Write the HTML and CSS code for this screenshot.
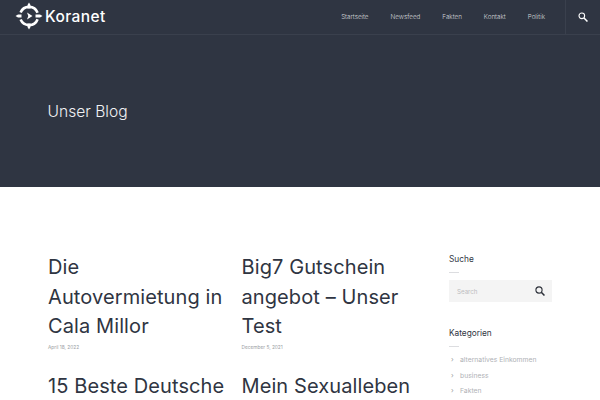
FILE: index.html
```html
<!DOCTYPE html>
<html lang="de">
<head>
<meta charset="utf-8">
<title>Unser Blog</title>
<link rel="stylesheet" href="styles.css">
</head>
<body>
<section class="hero">
  <header class="topbar">
    <a class="logo">
      <svg class="logo-icon" width="30" height="30" viewBox="0 0 30 30" fill="none" stroke="#fff">
        <path d="M6.600 11.400A9.200 9.200 0 0 1 23.600 11.800M23.600 18.200A9.200 9.200 0 0 1 6.600 18.600" stroke-width="2.600"/>
        <path d="M15 1.500l1.500 2.500v3.500h-3V4zM15 28.500l1.500-2.500v-3.500h-3V26zM1.500 15l2.500-1.500h3.500v3H4zM28.500 15l-2.500-1.500h-4.500v3H26z" fill="#fff" stroke="none"/>
        <path d="M13 11.500l5.500 3.500-5.500 3.500 1.300-3.500z" fill="#fff" stroke="none"/>
      </svg>
      <span class="logo-text">Koranet</span>
    </a>
    <nav class="nav">
      <a>Startseite</a>
      <a>Newsfeed</a>
      <a>Fakten</a>
      <a>Kontakt</a>
      <a>Politik</a>
    </nav>
    <div class="nav-search">
      <svg width="10" height="10" viewBox="0 0 11 11" fill="none" stroke="#fff" stroke-width="1.200"><circle cx="4.200" cy="4.200" r="3.100"/><path d="M6.600 6.600l3.800 3.800" stroke-width="1.700"/></svg>
    </div>
  </header>
  <h1 class="hero-title">Unser Blog</h1>
</section>
<main class="content">
  <div class="posts">
    <article class="post">
      <h2>Die Autovermietung in Cala Millor</h2>
      <time>April 18, 2022</time>
    </article>
    <article class="post">
      <h2>Big7 Gutschein angebot – Unser Test</h2>
      <time>December 5, 2021</time>
    </article>
    <article class="post">
      <h2>15 Beste Deutsche</h2>
    </article>
    <article class="post">
      <h2>Mein Sexualleben</h2>
    </article>
  </div>
  <aside class="sidebar">
    <h3>Suche</h3>
    <div class="searchbox">
      <span>Search</span>
      <svg width="10" height="10" viewBox="0 0 11 11" fill="none" stroke="#2b2f38" stroke-width="1.200"><circle cx="4.400" cy="4.400" r="3.400"/><path d="M6.900 6.900l3.500 3.500" stroke-width="1.700"/></svg>
    </div>
    <h3 class="cat-title">Kategorien</h3>
    <ul class="cats">
      <li>alternatives Einkommen</li>
      <li>business</li>
      <li>Fakten</li>
    </ul>
  </aside>
</main>
</body>
</html>
```
FILE: styles.css
```css
* { box-sizing: border-box; }
html, body { margin: 0; height: 400px; overflow: hidden; background: #fff; }
body { font-family: Inter, "Liberation Sans", sans-serif; color: #2f3542; }

.hero { height: 187px; background: #2f3542; }
.topbar {
  height: 35px;
  display: flex;
  align-items: center;
  border-bottom: 1px solid #3a404d;
  padding-left: 14px;
}
.logo { display: flex; align-items: center; gap: 1px; margin-top: -2px; }
.logo-text { color: #fff; font-size: 15.500px; font-weight: 500; letter-spacing: 0.400px; }
.nav { margin-left: auto; display: flex; gap: 22px; padding-right: 20px; }
.nav a { color: #d4d6da; font-size: 6.300px; font-weight: 300; }
.nav-search {
  width: 35px; height: 34px;
  border-left: 1px solid #3a404d;
  display: flex; align-items: center; justify-content: center;
}
.hero-title {
  margin: 66px 0 0 47.500px;
  font-size: 15.600px; line-height: 22px; font-weight: 300;
  color: #f0f1f3;
}

.content { display: flex; padding: 66px 48px 0; }
.posts {
  width: 387px;
  display: grid;
  grid-template-columns: 193.500px 193.500px;
  grid-auto-rows: min-content;
  row-gap: 21px;
}
.post h2 {
  margin: 0; padding-right: 12px;
  font-size: 20px; line-height: 29.500px; font-weight: 400;
  letter-spacing: 0.100px;
  color: #2f3542;
}
.post time { display: block; margin-top: 1px; font-size: 4.800px; line-height: 8px; color: #9a9da3; }

.sidebar { margin-left: 14px; width: 103px; }
.sidebar h3 {
  margin: 0; font-size: 8.300px; line-height: 12px; font-weight: 400; color: #2f3542;
}
.sidebar h3::after {
  content: ""; display: block; width: 10px; height: 1px; background: #dcdde0; margin-top: 7px;
}
.searchbox {
  margin-top: 7px; height: 22px; background: #f4f4f4;
  display: flex; align-items: center; justify-content: space-between;
  padding: 0 7px 0 8px;
}
.searchbox span { font-size: 6.200px; color: #bcbdc0; }
.cat-title { margin-top: 25px !important; }
.cats { list-style: none; margin: 5px 0 0; padding: 0; }
.cats li {
  font-size: 6.800px; line-height: 15.700px; color: #b0b2b6; padding-left: 11px; position: relative;
}
.cats li::before {
  content: "›"; position: absolute; left: 2px; top: 0; color: #999;
}
```
